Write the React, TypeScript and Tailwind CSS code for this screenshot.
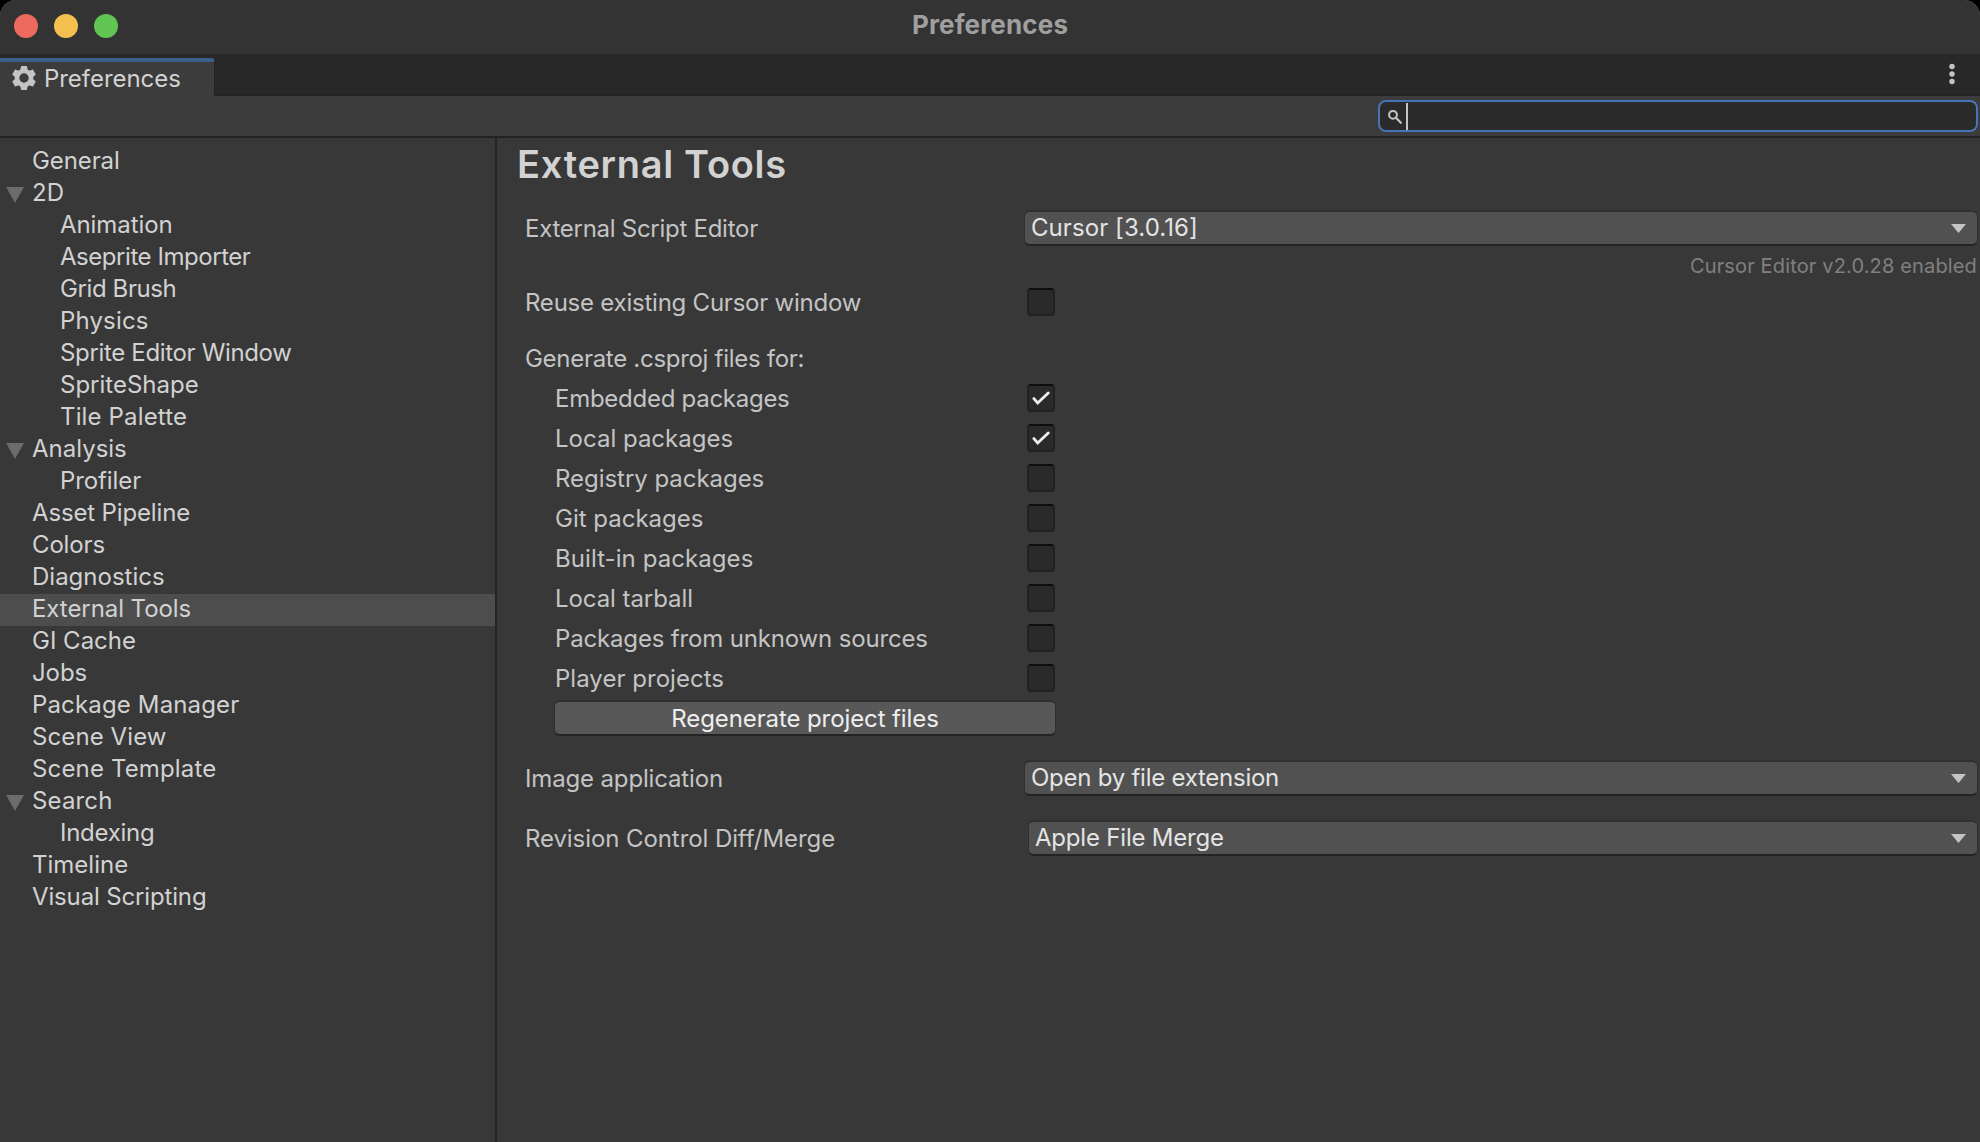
import { useState } from 'react';
import clsx from 'clsx';

interface TreeItem {
  label: string;
  tracking: string;
  depth?: number;
  expandable?: boolean;
}

// Tracking is tuned per label so the text keeps the editor's pixel-snapped widths
const TREE: TreeItem[] = [
  { label: 'General', tracking: 'tracking-[-0.1px]' },
  { label: '2D', tracking: 'tracking-[0px]', expandable: true },
  { label: 'Animation', tracking: 'tracking-[-0.07px]', depth: 1 },
  { label: 'Aseprite Importer', tracking: 'tracking-[-0.45px]', depth: 1 },
  { label: 'Grid Brush', tracking: 'tracking-[-0.4px]', depth: 1 },
  { label: 'Physics', tracking: 'tracking-[0.15px]', depth: 1 },
  { label: 'Sprite Editor Window', tracking: 'tracking-[-0.34px]', depth: 1 },
  { label: 'SpriteShape', tracking: 'tracking-[0px]', depth: 1 },
  { label: 'Tile Palette', tracking: 'tracking-[0.15px]', depth: 1 },
  { label: 'Analysis', tracking: 'tracking-[0px]', expandable: true },
  { label: 'Profiler', tracking: 'tracking-[-0.1px]', depth: 1 },
  { label: 'Asset Pipeline', tracking: 'tracking-[-0.15px]' },
  { label: 'Colors', tracking: 'tracking-[-0.15px]' },
  { label: 'Diagnostics', tracking: 'tracking-[0px]' },
  { label: 'External Tools', tracking: 'tracking-[-0.07px]' },
  { label: 'GI Cache', tracking: 'tracking-[0px]' },
  { label: 'Jobs', tracking: 'tracking-[-0.1px]' },
  { label: 'Package Manager', tracking: 'tracking-[0.15px]' },
  { label: 'Scene View', tracking: 'tracking-[0.1px]' },
  { label: 'Scene Template', tracking: 'tracking-[0.15px]' },
  { label: 'Search', tracking: 'tracking-[0.15px]', expandable: true },
  { label: 'Indexing', tracking: 'tracking-[-0.28px]', depth: 1 },
  { label: 'Timeline', tracking: 'tracking-[0px]' },
  { label: 'Visual Scripting', tracking: 'tracking-[-0.15px]' },
];

const PACKAGE_KINDS = [
  { label: 'Embedded packages', tracking: 'tracking-[-0.27px]', on: true },
  { label: 'Local packages', tracking: 'tracking-[0px]', on: true },
  { label: 'Registry packages', tracking: 'tracking-[-0.04px]', on: false },
  { label: 'Git packages', tracking: 'tracking-[0px]', on: false },
  { label: 'Built-in packages', tracking: 'tracking-[0.07px]', on: false },
  { label: 'Local tarball', tracking: 'tracking-[-0.07px]', on: false },
  { label: 'Packages from unknown sources', tracking: 'tracking-[-0.16px]', on: false },
  { label: 'Player projects', tracking: 'tracking-[0.03px]', on: false },
];

export default function App() {
  const [selected, setSelected] = useState('External Tools');
  const [reuse, setReuse] = useState(false);
  const [kinds, setKinds] = useState(PACKAGE_KINDS);

  const toggleKind = (index: number) =>
    setKinds(kinds.map((k, i) => (i === index ? { ...k, on: !k.on } : k)));

  return (
    <div className="bg-black">
      <div className="flex h-[1142px] w-[1980px] flex-col overflow-hidden rounded-tl-[16px] rounded-tr-[16px] bg-[#383838] font-['Inter',sans-serif] text-[24px] leading-8 text-[#d2d2d2]">
        <TitleBar />
        <TabBar />
        <Toolbar />

        <div className="flex min-h-0 flex-1">
          {/* Settings tree */}
          <nav className="w-[497px] shrink-0 border-r-2 border-[#232323] pt-2">
            {TREE.map((item) => (
              <TreeRow
                key={item.label}
                item={item}
                selected={item.label === selected}
                onSelect={() => setSelected(item.label)}
              />
            ))}
          </nav>

          {/* Settings page */}
          <main className="flex-1 pr-0.5 pl-7 text-[#c4c4c4]">
            <h1 className="mt-[3px] -ml-2 h-[47px] text-[38px] leading-[46px] font-semibold tracking-[0.7px] text-[#d2d2d2]">
              External Tools
            </h1>

            <div className="mt-[22px] flex h-9 items-center">
              <Label className="tracking-[-0.27px]">External Script Editor</Label>
              <Dropdown className="tracking-[0.07px]" value="Cursor [3.0.16]" />
            </div>
            <p className="mt-1 h-8 pr-px text-right text-[20px] tracking-[0.15px] text-[#808080]">
              Cursor Editor v2.0.28 enabled
            </p>

            <div className="mt-1.5 flex h-7 items-center">
              <Label className="tracking-[-0.23px]">Reuse existing Cursor window</Label>
              <Checkbox className="ml-[3px]" checked={reuse} onChange={() => setReuse(!reuse)} />
            </div>

            <p className="mt-[27px] h-8 tracking-[-0.29px]">Generate .csproj files for:</p>
            <div className="mt-[3px] pl-[30px]">
              {kinds.map((kind, i) => (
                <div key={kind.label} className="flex h-10 items-center">
                  <span className={clsx('w-[472px] pt-px', kind.tracking)}>{kind.label}</span>
                  <Checkbox checked={kind.on} onChange={() => toggleKind(i)} />
                </div>
              ))}
            </div>
            <button className="mt-0.5 ml-[29px] flex h-9 w-[502px] items-center justify-center rounded-md border-x border-t-2 border-b-2 border-[#303030] border-b-[#242424] bg-[#585858] pt-0.5 tracking-[-0.1px] text-[#eeeeee]">
              Regenerate project files
            </button>

            <div className="mt-6 flex h-9 items-center">
              <Label className="tracking-[-0.15px]">Image application</Label>
              <Dropdown className="tracking-[-0.25px]" value="Open by file extension" />
            </div>
            <div className="mt-6 flex h-9 items-center">
              <Label className="tracking-[-0.08px]">Revision Control Diff/Merge</Label>
              <Dropdown className="ml-1 tracking-[-0.2px]" value="Apple File Merge" />
            </div>
          </main>
        </div>
      </div>
    </div>
  );
}

function TitleBar() {
  return (
    <header className="relative flex h-[54px] shrink-0 items-center bg-[#333333] pb-0.5">
      {/* Lit window corners */}
      <span className="absolute -top-px -left-px size-[17px] rounded-tl-[17px] border-t border-l border-[#7a7a7a]" />
      <span className="absolute -top-px -right-px size-[17px] rounded-tr-[17px] border-t border-r border-[#7a7a7a]" />
      <div className="flex flex-1 basis-0 gap-4">
        <span className="ml-3.5 size-6 rounded-full bg-[#ec6a5e]" />
        <span className="size-6 rounded-full bg-[#f4bf4f]" />
        <span className="size-6 rounded-full bg-[#61c554]" />
      </div>
      <span className="pb-0.5 text-[26px] font-bold tracking-[0.15px] text-[#9f9f9f]">Preferences</span>
      <div className="flex-1 basis-0" />
    </header>
  );
}

function TabBar() {
  return (
    <div className="flex h-[42px] shrink-0 items-end justify-between bg-[#282828]">
      <div className="flex h-[38px] w-[215px] items-center rounded-tr border-t-4 border-r border-t-[#3a5f8a] border-r-[#232323] bg-[#3c3c3c] pl-3">
        <GearIcon />
        <span className="ml-2 tracking-[-0.05px]">Preferences</span>
      </div>
      <div className="flex h-[42px] flex-1 justify-end border-b-2 border-[#232323] pr-[25px]">
        <svg width="6" height="22" viewBox="0 0 6 22" className="mt-[9px]" fill="#c4c4c4">
          <circle cx="3" cy="3.5" r="2.7" />
          <circle cx="3" cy="11" r="2.7" />
          <circle cx="3" cy="18.5" r="2.7" />
        </svg>
      </div>
    </div>
  );
}

function Toolbar() {
  return (
    <div className="flex h-[42px] shrink-0 justify-end border-b-2 border-[#232323] bg-[#3c3c3c] pt-1 pr-0.5">
      <div className="flex h-8 w-[600px] items-center rounded-lg border-2 border-[#4674b4] bg-[#2a2a2a] pl-2">
        <svg width="16" height="16" viewBox="0 0 16 16" fill="none" stroke="#c4c4c4">
          <circle cx="5" cy="6.8" r="3.9" strokeWidth="2" />
          <path d="M8 9.8 12.8 14.8" strokeWidth="2.2" strokeLinecap="round" />
        </svg>
        <span className="ml-0.5 h-[27px] w-0.5 bg-[#c4c4c4]" />
      </div>
    </div>
  );
}

function GearIcon() {
  const teeth = [0, 60, 120, 180, 240, 300];
  return (
    <svg width="24" height="24" viewBox="0 0 24 24" className="mb-0.5" fill="#c4c4c4">
      {teeth.map((angle) => (
        <path key={angle} d="M8 5 9.2 0h5.6L16 5z" transform={`rotate(${angle} 12 12)`} />
      ))}
      <circle cx="12" cy="12" r="7" fill="none" stroke="#c4c4c4" strokeWidth="4.6" />
    </svg>
  );
}

interface TreeRowProps {
  item: TreeItem;
  selected: boolean;
  onSelect: () => void;
}

function TreeRow({ item, selected, onSelect }: TreeRowProps) {
  return (
    <div
      onClick={onSelect}
      className={clsx(
        'flex h-8 items-center pb-0.5',
        item.depth ? 'pl-[60px]' : item.expandable ? 'pl-1.5' : 'pl-8',
        selected && 'bg-[#4d4d4d]'
      )}
    >
      {item.expandable && (
        <svg width="18" height="16" viewBox="0 0 18 16" className="mt-1 mr-2" fill="#6b6b6b">
          <path d="M0 0h18L9 16z" />
        </svg>
      )}
      <span className={item.tracking}>{item.label}</span>
    </div>
  );
}

function Label({ children, className }: { children: string; className?: string }) {
  return (
    <span className={clsx('w-[499px] shrink-0 pt-px whitespace-nowrap', className)}>{children}</span>
  );
}

function Dropdown({ value, className }: { value: string; className?: string }) {
  return (
    <button
      className={clsx(
        'flex h-9 flex-1 items-center justify-between rounded-md border-x border-t-2 border-b-2 border-[#303030] border-b-[#242424] bg-[#515151] pr-[11px] pl-1.5 text-[#e4e4e4]',
        className
      )}
    >
      <span>{value}</span>
      <svg width="15" height="9" viewBox="0 0 15 9" className="mt-px" fill="#c4c4c4">
        <path d="M0 0h15L7.5 9z" />
      </svg>
    </button>
  );
}

interface CheckboxProps {
  checked: boolean;
  onChange: () => void;
  className?: string;
}

function Checkbox({ checked, onChange, className }: CheckboxProps) {
  return (
    <button
      onClick={onChange}
      className={clsx(
        'flex size-7 items-center justify-center rounded border-2 border-[#212121] border-t-[#0d0d0d] bg-[#2a2a2a]',
        className
      )}
    >
      {checked && (
        <svg width="18" height="16" viewBox="0 0 18 16" fill="none" stroke="#eeeeee" strokeWidth="2.8">
          <path d="m1.9 8.6 3.8 4.4L16.2 3" strokeLinecap="round" />
        </svg>
      )}
    </button>
  );
}
